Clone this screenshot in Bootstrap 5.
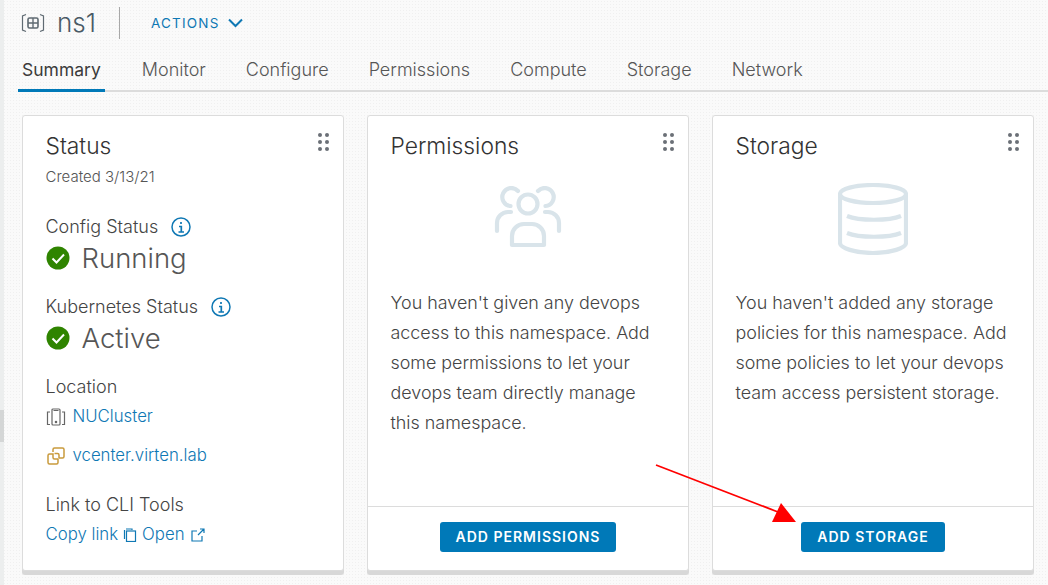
<!DOCTYPE html>
<html lang="en"><head><meta charset="utf-8"><title>ns1</title>
<link href="https://cdn.jsdelivr.net/npm/bootstrap@5.3.0/dist/css/bootstrap.min.css" rel="stylesheet">
<style>
html,body{height:585px;overflow:hidden}
body{font-family:Inter,"Liberation Sans",sans-serif;color:#565656;background-color:#fafafa;background-image:radial-gradient(#f0f0f0 .6px,transparent .8px);background-size:3px 3px;position:relative}
.rail{width:4px;background:#eceeee;flex:none;position:relative}
.rail-grip{position:absolute;left:0;top:410px;width:4px;height:32px;background:#d4d6d6}
.head-row{height:46px;padding-left:17px}
.ns-title{font-size:26px;font-weight:300;color:#4a5a66;line-height:1;margin:0 23px 0 12px}
.head-sep{width:1px;height:32px;background:#a8a8a8}
.act{font-size:13.500px;letter-spacing:1.200px;color:#0f78b4;margin-left:31px;text-transform:uppercase}
.tab-row{height:46px;margin-left:14px;border-bottom:2px solid #dcdcdc}
.tab-item{font-size:18px;font-weight:300;color:#565656;padding:1px 4px 0;margin-right:32px;height:46px;line-height:46px}
.tab-on{color:#3b3b3b;border-bottom:3px solid #0079b8;font-weight:400;font-size:17.500px;margin-right:33px}
.cards{padding:23px 0 0 18px;gap:23px}
.pane{width:322px;height:456px;background:#fff;border:1px solid #dcdcdc;border-radius:3px;box-shadow:0 4px 0 #d8d8d8;position:relative}
.pane-body{padding:15px 22.500px 0}
.pane-title{font-size:22.800px;font-weight:300;color:#333;line-height:30px;margin:0}
.grip{position:absolute;top:17px;right:14px;display:grid;grid-template-columns:4px 4px;gap:3px 3px}
.grip i{width:4px;height:4px;border-radius:50%;background:#6b7077;display:block}
.muted-sm{font-size:15px;font-weight:300;color:#555;line-height:20px;margin-top:6px}
.lbl{font-size:18px;font-weight:300;color:#444;line-height:24px}
.lbl-info{margin-left:13px}
.lbl-a{margin-top:28px}
.lbl-b{margin-top:20px}
.lbl-c{margin-top:25px}
.state{font-size:27.500px;font-weight:300;color:#565656;line-height:34px;margin-top:2px}
.lnk{color:#0f78b4;font-size:16.800px;font-weight:300;text-decoration:none}
.loc-row{height:24px;margin-top:6px}
.loc-row+.loc-row{margin-top:15px}
.loc-ico{margin-right:7px}
.cli-row{margin-top:5px}
.cli-copy{margin:0 5px}
.cli-open{margin-left:6px}
.hero{display:flex;justify-content:center;height:80px;margin-top:21px}
.hero-people{margin-top:4px}
.hero-db{margin-top:1px}
.blurb{font-size:17.900px;font-weight:300;line-height:30px;color:#444;margin:26px 0 0}
.pane-foot{position:absolute;left:0;right:0;bottom:0;height:64px;border-top:1px solid #dcdcdc;display:flex;justify-content:center;align-items:center;padding-bottom:4px}
.act-btn{background:#0079b8;color:#fff;border:0;border-radius:3px;height:30px;font-size:14px;font-weight:600;letter-spacing:1px;padding:0 16px;line-height:30px;text-transform:uppercase}
.red-arrow{position:absolute;left:650px;top:460px;pointer-events:none}
</style></head>
<body>
<div class="d-flex h-100">
<div class="rail"><div class="rail-grip"></div></div>
<div class="flex-grow-1">
<div class="head-row d-flex align-items-center">
<svg width="24" height="20" viewBox="0 0 24 20" fill="none" stroke="#5f6a72" stroke-width="1.200"><path d="M5 1.500 1.500 3v14L5 18.500M19 1.500 22.500 3v14L19 18.500"/><rect x="7" y="5" width="10" height="10" rx="1.500" stroke-width="1.600"/><path d="M12 5v10M7 10h10" stroke-width="1.400"/></svg>
<span class="ns-title">ns1</span><span class="head-sep"></span>
<span class="act">Actions</span>
<svg class="ms-2" width="15" height="10" viewBox="0 0 15 10" fill="none" stroke="#0f78b4" stroke-width="2"><path d="M1 1.500l6.500 6.500L14 1.500"/></svg>
</div>
<div class="tab-row d-flex">
<div class="tab-item tab-on">Summary</div><div class="tab-item">Monitor</div><div class="tab-item">Configure</div><div class="tab-item">Permissions</div><div class="tab-item">Compute</div><div class="tab-item">Storage</div><div class="tab-item">Network</div>
</div>
<div class="cards d-flex">
<section class="pane"><div class="grip"><i></i><i></i><i></i><i></i><i></i><i></i></div>
<div class="pane-body">
<h3 class="pane-title">Status</h3>
<div class="muted-sm">Created 3/13/21</div>
<div class="lbl lbl-a d-flex align-items-center">Config Status
<svg class="lbl-info" width="20" height="20" viewBox="0 0 20 20" fill="none" stroke="#0f78b4"><circle cx="10" cy="10" r="9" stroke-width="1.500"/><path d="M10 5v2M8 9.500h2.300V15M7.500 15h5.500" stroke-width="1.700"/></svg></div>
<div class="state d-flex align-items-center"><svg class="me-2" width="24" height="24" viewBox="0 0 24 24"><circle cx="12" cy="12" r="11.500" fill="#2f8400"/><path d="M6.500 12.500l4 4 7.500-8" fill="none" stroke="#fff" stroke-width="2"/></svg><span class="ms-1">Running</span></div>
<div class="lbl lbl-b d-flex align-items-center">Kubernetes Status
<svg class="lbl-info" width="20" height="20" viewBox="0 0 20 20" fill="none" stroke="#0f78b4"><circle cx="10" cy="10" r="9" stroke-width="1.500"/><path d="M10 5v2M8 9.500h2.300V15M7.500 15h5.500" stroke-width="1.700"/></svg></div>
<div class="state d-flex align-items-center"><svg class="me-2" width="24" height="24" viewBox="0 0 24 24"><circle cx="12" cy="12" r="11.500" fill="#2f8400"/><path d="M6.500 12.500l4 4 7.500-8" fill="none" stroke="#fff" stroke-width="2"/></svg><span class="ms-1">Active</span></div>
<div class="lbl lbl-b">Location</div>
<div class="loc-row d-flex align-items-center"><svg class="loc-ico" width="20" height="20" viewBox="0 0 20 20" fill="none" stroke="#666" stroke-width="1.200"><rect x="6" y="2" width="8" height="16" rx="1"/><path d="M7.500 3.500h5M4 5H1.500v12.500H4M16 5h2.500v12.500H16"/><circle cx="10" cy="15" r=".7" fill="#666"/></svg><a class="lnk" href="#">NUCluster</a></div>
<div class="loc-row d-flex align-items-center"><svg class="loc-ico" width="20" height="20" viewBox="0 0 20 20" fill="none" stroke="#c99a3c" stroke-width="1.500"><path d="M7 6V3.500A1.500 1.500 0 0 1 8.500 2h8A1.500 1.500 0 0 1 18 3.500v7a1.500 1.500 0 0 1-1.500 1.500H13M13 12V9a1.500 1.500 0 0 0-1.500-1.500H8.500"/><path d="M2 9.500A1.500 1.500 0 0 1 3.500 8H7v3.500A1.500 1.500 0 0 0 8.500 13H12v3.500a1.500 1.500 0 0 1-1.500 1.500h-7A1.500 1.500 0 0 1 2 16.500z"/></svg><a class="lnk" href="#">vcenter.virten.lab</a></div>
<div class="lbl lbl-c">Link to CLI Tools</div>
<div class="cli-row d-flex align-items-center"><a class="lnk" href="#">Copy link</a>
<svg class="cli-copy" width="14" height="14" viewBox="0 0 14 14" fill="none" stroke="#0f78b4" stroke-width="1.200"><path d="M3 1h6v1M1.500 2v9"/><rect x="3.500" y="3" width="9" height="10.500"/></svg>
<a class="lnk" href="#">Open</a>
<svg class="cli-open" width="14" height="14" viewBox="0 0 14 14" fill="none" stroke="#0f78b4" stroke-width="1.200"><path d="M11 8v5H1V3h5M7 7l6-6M9 1h4v4"/></svg></div>
</div></section>

<section class="pane"><div class="grip"><i></i><i></i><i></i><i></i><i></i><i></i></div>
<div class="pane-body">
<h3 class="pane-title">Permissions</h3>
<div class="hero"><svg class="hero-people" width="70" height="62" viewBox="0 0 70 62" fill="none" stroke="#d9e4ea" stroke-width="4.200" stroke-linecap="round" stroke-linejoin="round"><circle cx="35" cy="18" r="9.500"/><path d="M19 59V50a12 12 0 0 1 12-12h8a12 12 0 0 1 12 12v9z"/><path d="M25 5A9 9 0 1 0 17.500 20M45 5A9 9 0 1 1 52.500 20M18 26h-3a11 11 0 0 0-11 11v8M52 26h3a11 11 0 0 1 11 11v8"/></svg></div>
<p class="blurb">You haven't given any devops access to this namespace. Add some permissions to let your devops team directly manage this namespace.</p>
</div>
<div class="pane-foot"><button class="act-btn">Add Permissions</button></div></section>

<section class="pane"><div class="grip"><i></i><i></i><i></i><i></i><i></i><i></i></div>
<div class="pane-body">
<h3 class="pane-title">Storage</h3>
<div class="hero"><svg class="hero-db" width="70" height="72" viewBox="0 0 70 72" fill="none" stroke="#d9e4ea" stroke-width="4.200"><path d="M2 12v48c0 5 15 10 33 10s33-5 33-10V12"/><ellipse cx="35" cy="11" rx="33" ry="9"/><path d="M9 33c12 5 42 5 54 0M9 50c12 5 42 5 54 0"/></svg></div>
<p class="blurb">You haven't added any storage policies for this namespace. Add some policies to let your devops team access persistent storage.</p>
</div>
<div class="pane-foot"><button class="act-btn">Add Storage</button></div></section>
</div>
</div></div>
<svg class="red-arrow" width="160" height="70" viewBox="0 0 160 70"><path d="M6 5 128 52" stroke="#f00" stroke-width="1.800"/><path d="M122 62 L131 43 L146 62z" fill="#f00"/></svg>
</body></html>
